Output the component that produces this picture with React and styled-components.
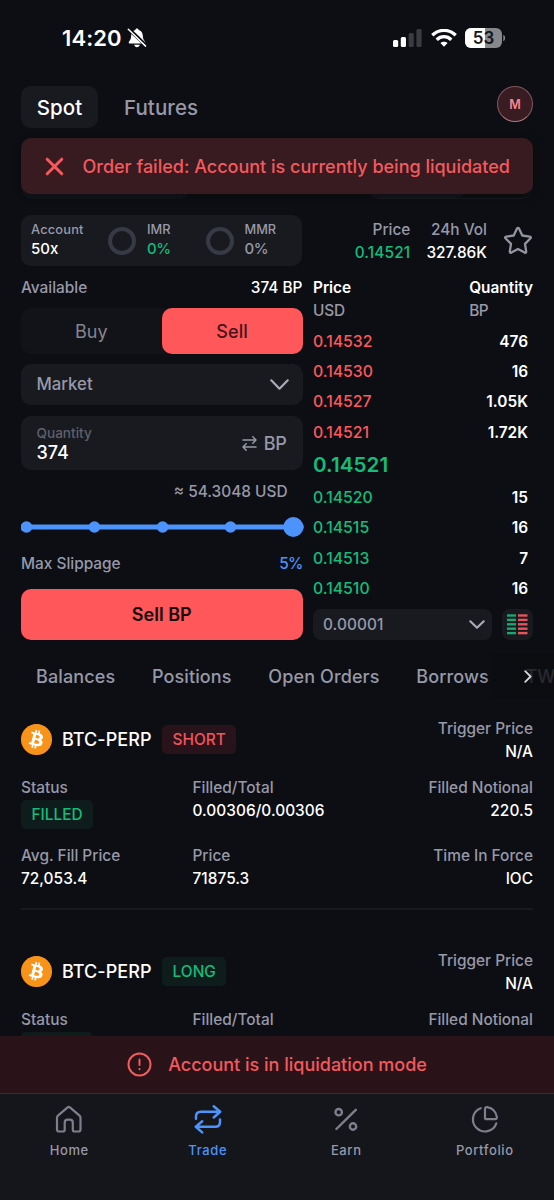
import styled, { createGlobalStyle, css } from 'styled-components';
import { FaBitcoin } from 'react-icons/fa';


const colores = {
    fondo: '#0d0e13',
    panel: '#191a20',
    texto: '#ffffff',
    gris: '#9799a8',
    grisOscuro: '#5e606b',
    rojo: '#ff575a',
    verde: '#12bd7a',
    azul: '#4c93fc',
};


const GlobalStyle = createGlobalStyle`
  * { box-sizing: border-box; }
  body {
    margin: 0;
    background: ${colores.fondo};
    font-family: Inter, sans-serif;
    color: ${colores.texto};
    -webkit-font-smoothing: antialiased;
  }
  button { font: inherit; color: inherit; border: 0; background: none; padding: 0; letter-spacing: inherit; }
  svg { display: block; flex: none; }
`;


const Pantalla = styled.div`
  position: relative;
  width: 554px;
  height: 1200px;
  overflow: hidden;
  display: flex;
  flex-direction: column;
  background: ${colores.fondo};
`;

const Texto = styled.span`
  font-size: ${p => p.$size || 15.4}px;
  font-weight: ${p => p.$weight || 450};
  line-height: ${p => p.$line || 23}px;
  letter-spacing: ${p => p.$spacing ?? 0}px;
  color: ${p => p.$color || colores.texto};
  white-space: nowrap;
`;

const BarraEstado = styled.div`
  height: 75px;
  padding: 0 48px 0 62px;
  display: flex;
  align-items: center;
  gap: 5px;
  flex: none;
`;

const IconosEstado = styled.div`
  margin-left: auto;
  display: flex;
  align-items: center;
  gap: 8.5px;
`;

const Encabezado = styled.header`
  height: 63px;
  padding: 11px 21px 0;
  display: flex;
  align-items: flex-start;
  flex: none;
`;

const Modo = styled.button`
  height: 42px;
  padding: 0 ${p => (p.$activo ? 15.7 : 26)}px;
  border-radius: 10px;
  font-size: 20.5px;
  font-weight: ${p => (p.$activo ? 500 : 450)};
  letter-spacing: 0.08px;
  color: ${p => (p.$activo ? colores.texto : colores.gris)};
  background: ${p => (p.$activo ? colores.panel : 'none')};
`;

const Avatar = styled.div`
  width: 36px;
  height: 36px;
  margin-left: auto;
  border-radius: 50%;
  border: 1px solid #80575d;
  border-bottom-color: #b07a80;
  background: #391c22;
  color: #f5878c;
  font-size: 12.5px;
  font-weight: 600;
  display: flex;
  align-items: center;
  justify-content: center;
`;

const FilaMercado = styled.div`
  height: 61px;
  padding: 0 21px;
  display: flex;
  justify-content: space-between;
  flex: none;
`;

const PildoraMercado = styled.div`
  width: ${p => p.$ancho}px;
  border-radius: 12px;
  border: ${p => (p.$borde ? '1px solid #191a20' : 0)};
  background: ${p => (p.$borde ? 'none' : '#13141a')};
`;

const MitadPildora = styled.div`
  width: 98px;
  height: 100%;
  border-radius: 11px;
  background: #15161c;
`;

const Aviso = styled.div`
  position: absolute;
  top: 138px;
  left: 21px;
  width: 512px;
  height: 56px;
  border-radius: 10px;
  background: #371b20;
  box-shadow: 0 2px 8px rgba(0, 0, 0, 0.3);
  display: flex;
  align-items: center;
  padding-left: 23.5px;
  gap: 19px;
`;

const Resumen = styled.section`
  height: 51px;
  margin: 16px 21px 0;
  display: flex;
  justify-content: space-between;
  flex: none;
`;

const PanelCuenta = styled.div`
  width: 281px;
  border-radius: 10px;
  background: ${colores.panel};
  display: grid;
  grid-template-columns: 77px 39px 58.5px 39px auto;
  align-items: center;
  padding-left: 10px;
`;

const Columna = styled.div`
  display: flex;
  flex-direction: column;
  align-items: ${p => p.$align || 'flex-start'};
  padding-bottom: ${p => p.$abajo || 0}px;
`;

const Aro = styled.div`
  width: 28px;
  height: 28px;
  border-radius: 50%;
  border: 4px solid #373944;
`;

const DatosMercado = styled.div`
  display: flex;
  align-items: center;
  gap: 16px;
`;

const Operar = styled.section`
  height: 374px;
  padding: 0 21px;
  display: grid;
  grid-template-columns: 281.5px 220px;
  gap: 10.5px;
  flex: none;
`;

const Formulario = styled.div`
  display: flex;
  flex-direction: column;
`;

const Fila = styled.div`
  height: ${p => p.$alto}px;
  flex: none;
  display: flex;
  align-items: center;
  justify-content: ${p => p.$justify || 'space-between'};
  padding-right: ${p => p.$derecha || 0}px;
`;

const Lados = styled.div`
  height: 46px;
  display: grid;
  grid-template-columns: 1fr 1fr;
  border-radius: 10px;
  background: #121318;
`;

const Lado = styled.button`
  border-radius: 10px;
  font-size: 18px;
  letter-spacing: 0.1px;
  color: #85868d;
  ${p => p.$activo && css`
    background: ${colores.rojo};
    color: #45151a;
    font-weight: 500;
  `}
`;

const Campo = styled.div`
  height: ${p => p.$alto}px;
  margin-top: ${p => p.$arriba}px;
  padding: 0 ${p => p.$derecha || 16}px 0 15.5px;
  border-radius: 10px;
  background: ${colores.panel};
  display: flex;
  align-items: center;
  justify-content: space-between;
`;

const Unidad = styled.div`
  display: flex;
  align-items: center;
  gap: 7px;
`;

const Deslizador = styled.div`
  height: 30px;
  width: 283px;
  display: flex;
  align-items: center;
`;

const BotonVender = styled.button`
  height: 51px;
  margin-top: 5px;
  border-radius: 10px;
  background: ${colores.rojo};
  color: #160a0d;
  font-size: 18px;
  font-weight: 600;
`;

const Libro = styled.div`
  padding-top: 10px;
  display: flex;
  flex-direction: column;
`;

const CabeceraLibro = styled.div`
  display: flex;
  justify-content: space-between;
  height: 50px;
`;

const PieLibro = styled.div`
  display: grid;
  grid-template-columns: 179px 31px;
  justify-content: space-between;
  height: 31px;
  margin-top: 5px;
`;

const Precision = styled.div`
  border-radius: 8px;
  background: ${colores.panel};
  display: flex;
  align-items: center;
  justify-content: space-between;
  padding: 0 7px 0 10px;
`;

const VistaLibro = styled.div`
  border-radius: 8px;
  background: ${colores.panel};
  display: grid;
  place-items: center;
`;

const Pestanas = styled.nav`
  position: relative;
  height: 72px;
  flex: none;
  display: flex;
  align-items: center;
  gap: 36.7px;
  padding-left: 36px;
  overflow: hidden;
`;

const MasPestanas = styled.div`
  position: absolute;
  right: 0;
  top: 14px;
  width: 70px;
  height: 44px;
  display: flex;
  align-items: center;
  padding-left: 40px;
  background: linear-gradient(90deg, rgba(11, 12, 16, 0) 0, rgba(11, 12, 16, 0.8) 16px);
`;

const Orden = styled.article`
  height: 232px;
  padding: 4.5px 21px 0;
  flex: none;
`;

const CabeceraOrden = styled.div`
  height: 46px;
  display: flex;
  align-items: center;
`;

const IconoMoneda = styled.div`
  width: 31px;
  height: 31px;
  border-radius: 50%;
  background: radial-gradient(circle, #fff 60%, #f7931a 61%);
  color: #f7931a;
  font-size: 31px;
  margin-right: 10px;
`;

const Etiqueta = styled.span`
  height: 29px;
  padding: 0 10.5px;
  border-radius: 5px;
  display: inline-flex;
  align-items: center;
  font-size: 15.4px;
  font-weight: 450;
  color: ${p => (p.$rojo ? '#f4545b' : colores.verde)};
  background: ${p => (p.$rojo ? '#28131a' : '#0e1d1c')};
  margin-left: ${p => p.$izq || 0}px;
  margin-top: ${p => p.$arriba || 0}px;
`;

const Precios = styled.div`
  margin-left: auto;
  display: flex;
  flex-direction: column;
  align-items: flex-end;
`;

const Detalle = styled.div`
  margin-top: 13.5px;
  display: grid;
  grid-template-columns: 171.5px 1fr 1fr;
  grid-auto-rows: 67.7px;
`;

const Linea = styled.div`
  height: 2px;
  margin-top: -3px;
  background: #191a1f;
`;

const Pie = styled.footer`
  position: absolute;
  left: 0;
  right: 0;
  bottom: 0;
  height: 164px;
  background: #14161b;
`;

const Liquidacion = styled.div`
  height: 57px;
  display: flex;
  align-items: center;
  justify-content: center;
  gap: 16px;
  background: #291318;
`;

const Menu = styled.nav`
  height: 107px;
  border-top: 1px solid #303137;
  display: grid;
  grid-template-columns: repeat(4, 1fr);
`;

const ItemMenu = styled.a`
  display: flex;
  flex-direction: column;
  align-items: center;
  padding-top: 10px;
  gap: 7.4px;
  color: ${p => (p.$activo ? colores.azul : '#7e7f8d')};
`;


const ventas = [
    { precio: '0.14532', cantidad: '476' },
    { precio: '0.14530', cantidad: '16' },
    { precio: '0.14527', cantidad: '1.05K' },
    { precio: '0.14521', cantidad: '1.72K' },
];

const compras = [
    { precio: '0.14520', cantidad: '15' },
    { precio: '0.14515', cantidad: '16' },
    { precio: '0.14513', cantidad: '7' },
    { precio: '0.14510', cantidad: '16' },
];

const pestanas = ['Balances', 'Positions', 'Open Orders', 'Borrows', 'TWAP'];

const ordenes = [
    { id: 1, lado: 'SHORT' },
    { id: 2, lado: 'LONG' },
];


const Trazo = ({ w = 30, h = w, grosor = 2, color = 'currentColor', children }) => (
    <svg width={w} height={h} viewBox={`0 0 ${w} ${h}`} fill="none" stroke={color}
         strokeWidth={grosor} strokeLinecap="round" strokeLinejoin="round">
        {children}
    </svg>
);

const Flecha = ({ w = 18, h = 10, color = '#a9abb7' }) => (
    <Trazo w={w} h={h} grosor={2.2} color={color}>
        <path d={`M1.3 1.3L${w / 2} ${h - 1.3}L${w - 1.3} 1.3`} />
    </Trazo>
);

const Silencio = () => (
    <svg width="20" height="20" viewBox="0 0 20 20">
        <path fill="#fff" d="M10 .5c-.9 0-1.5.6-1.6 1.4C5.700 2.600 4.300 4.800 4.200 7.600c-.1 3.200-.8 4.300-2 5.600-.9 1-.5 2.400.9 2.400h13.800c1.400 0 1.800-1.400.9-2.400-1.200-1.300-1.900-2.400-2-5.600-.1-2.800-1.500-5-4.200-5.700C11.500 1.100 10.900.5 10 .5zM7.200 16.800c.3 1.500 1.400 2.400 2.800 2.400s2.500-.9 2.800-2.400z" />
        <path d="M1.500.7L19.500 18" stroke={colores.fondo} strokeWidth="3.600" />
        <path d="M1.300 1.300L18.600 18.100" stroke="#fff" strokeWidth="1.500" strokeLinecap="round" />
    </svg>
);

const Senal = () => (
    <svg width="29" height="18" viewBox="0 0 29 18">
        <rect x="0" y="11" width="5.200" height="7" rx="1.500" fill="#fff" />
        <rect x="7.800" y="8" width="5.200" height="10" rx="1.500" fill="#fff" />
        <rect x="15.600" y="4" width="5.200" height="14" rx="1.500" fill="#3a3b40" />
        <rect x="23.400" y="0" width="5.200" height="18" rx="1.500" fill="#3a3b40" />
    </svg>
);

const Wifi = () => (
    <svg width="26" height="18" viewBox="0 0 26 18" fill="none" stroke="#fff" strokeWidth="3.300">
        <path d="M1.300 6.200C8-.2 18-.2 24.700 6.200" />
        <path d="M5.700 10.700C9.900 6.700 16.100 6.700 20.300 10.700" />
        <path d="M13 17.800l-3.600-3.700c2-1.800 5.200-1.800 7.200 0z" fill="#fff" stroke="none" />
    </svg>
);

const Bateria = () => (
    <svg width="41" height="20" viewBox="0 0 41 20">
        <defs>
            <clipPath id="carga"><rect x="0" y="0" width="37" height="20" rx="6" /></clipPath>
        </defs>
        <g clipPath="url(#carga)">
            <rect width="37" height="20" fill="#86878a" />
            <rect width="20" height="20" fill="#fff" />
        </g>
        <path d="M38.300 6.700c2.400.8 2.400 5.800 0 6.600z" fill="#86878a" />
        <text x="18.500" y="15.900" textAnchor="middle" fontFamily="Inter" fontWeight="600" fontSize="17" fill="#14151a">53</text>
    </svg>
);

const BarrasLibro = () => (
    <svg width="21" height="21" viewBox="0 0 21 21">
        {[0, 4.4, 8.8, 13.2, 17.6].map(y => (
            <g key={y}>
                <rect x="0" y={y + 0.3} width="9" height="2.400" fill="#18a970" />
                <rect x="11" y={y + 0.3} width="9.500" height="2.400" fill="#e65459" />
            </g>
        ))}
    </svg>
);

const IconoHome = () => (
    <Trazo grosor={2.2}>
        <path d="M13.600 3.400L4.200 11.400Q3 12.500 3 14V25.500Q3 27.500 5 27.500H9Q10.700 27.500 10.700 25.800V18.700Q10.700 15.700 13.700 15.700H15.800Q18.800 15.700 18.800 18.700V25.800Q18.800 27.500 20.500 27.500H24.500Q26.500 27.500 26.500 25.500V14Q26.500 12.500 25.300 11.400L15.900 3.400Q14.700 2.400 13.600 3.400Z" />
    </Trazo>
);

const IconoTrade = () => (
    <Trazo grosor={2.5}>
        <path d="M3 14.700V12.500Q3 7.700 7.800 7.700H27M20.700 2.200L27.200 7.700L20.700 13.500" />
        <path d="M27 15.500V18Q27 22.800 22.200 22.800H3M9.200 17.300L2.800 22.800L9.200 28.400" />
    </Trazo>
);

const IconoEarn = () => (
    <Trazo grosor={2.4}>
        <circle cx="7.700" cy="8.200" r="3.200" />
        <circle cx="22" cy="22.500" r="3.200" />
        <path d="M24.800 5.800L5.400 25" />
    </Trazo>
);

const IconoPortfolio = () => (
    <Trazo grosor={2.2}>
        <path d="M10.700 4.200A12 12 0 1 0 26.300 19.300" />
        <path d="M15 5.200Q15 2.900 17.200 3.200A12 12 0 0 1 26.800 12.700Q27.200 15.200 25 15.200H16.500Q15 15.200 15 13.700Z" />
    </Trazo>
);

const menu = [
    { nombre: 'Home', Icono: IconoHome },
    { nombre: 'Trade', Icono: IconoTrade, activo: true },
    { nombre: 'Earn', Icono: IconoEarn },
    { nombre: 'Portfolio', Icono: IconoPortfolio },
];


function FilaLibro({ precio, cantidad, color }) {
    return (
        <Fila $alto={30.3} $derecha={5}>
            <Texto $size={15.8} $weight={500} $color={color}>{precio}</Texto>
            <Texto $weight={600}>{cantidad}</Texto>
        </Fila>
    );
}


function Dato({ titulo, valor, align }) {
    return (
        <Columna $align={align}>
            <Texto $color={colores.gris}>{titulo}</Texto>
            <Texto $weight={500} $spacing={0.03}>{valor}</Texto>
        </Columna>
    );
}


function TarjetaOrden({ lado }) {
    return (
        <Orden>
            <CabeceraOrden>
                <IconoMoneda><FaBitcoin /></IconoMoneda>
                <Texto $size={18} $spacing={0.05}>BTC-PERP</Texto>
                <Etiqueta $rojo={lado === 'SHORT'} $izq={10.5}>{lado}</Etiqueta>
                <Precios>
                    <Texto $color={colores.gris}>Trigger Price</Texto>
                    <Texto $weight={500}>N/A</Texto>
                </Precios>
            </CabeceraOrden>
            <Detalle>
                <Columna>
                    <Texto $color={colores.gris}>Status</Texto>
                    <Etiqueta $arriba={1}>FILLED</Etiqueta>
                </Columna>
                <Dato titulo="Filled/Total" valor="0.00306/0.00306" />
                <Dato titulo="Filled Notional" valor="220.5" align="flex-end" />
                <Dato titulo="Avg. Fill Price" valor="72,053.4" />
                <Dato titulo="Price" valor="71875.3" />
                <Dato titulo="Time In Force" valor="IOC" align="flex-end" />
            </Detalle>
            <Linea />
        </Orden>
    );
}


function App() {
    return (
        <Pantalla>
            <GlobalStyle />
            <BarraEstado>
                <Texto $size={22} $weight={600} $line={28} $spacing={0.1}>14:20</Texto>
                <Silencio />
                <IconosEstado>
                    <Senal />
                    <Wifi />
                    <Bateria />
                </IconosEstado>
            </BarraEstado>

            <Encabezado>
                <Modo $activo>Spot</Modo>
                <Modo>Futures</Modo>
                <Avatar>M</Avatar>
            </Encabezado>

            <FilaMercado>
                <PildoraMercado $ancho={170} />
                <PildoraMercado $ancho={165} $borde><MitadPildora /></PildoraMercado>
            </FilaMercado>

            <Resumen>
                <PanelCuenta>
                    <Columna $abajo={4}>
                        <Texto $size={12.8} $line={19} $color={colores.gris} $spacing={0.2}>Account</Texto>
                        <Texto $size={15} $line={19} $weight={500}>50x</Texto>
                    </Columna>
                    <Aro />
                    <Columna $abajo={4}>
                        <Texto $size={12.8} $line={19} $color={colores.gris}>IMR</Texto>
                        <Texto $size={15} $line={19} $color={colores.verde} $spacing={-0.4}>0%</Texto>
                    </Columna>
                    <Aro />
                    <Columna $abajo={4}>
                        <Texto $size={12.8} $line={19} $color={colores.gris}>MMR</Texto>
                        <Texto $size={15} $line={19} $color={colores.gris} $spacing={-0.4}>0%</Texto>
                    </Columna>
                </PanelCuenta>
                <DatosMercado>
                    <Columna $align="flex-end">
                        <Texto $color={colores.gris}>Price</Texto>
                        <Texto $color={colores.verde} $spacing={0.15}>0.14521</Texto>
                    </Columna>
                    <Columna $align="flex-end">
                        <Texto $color={colores.gris}>24h Vol</Texto>
                        <Texto $spacing={0.05}>327.86K</Texto>
                    </Columna>
                    <Trazo w={30} grosor={2.3} color="#9294a2">
                        <path d="M13.900 2.700L10.700 9.500L3.300 10.600Q1.300 11 2.700 12.500L8 17.900L6.800 25.400Q6.600 27.400 8.400 26.600L15 23L21.600 26.600Q23.400 27.400 23.200 25.400L22 17.900L27.300 12.500Q28.700 11 26.700 10.600L19.300 9.500L16.100 2.700Q15 1 13.900 2.700Z" />
                    </Trazo>
                </DatosMercado>
            </Resumen>

            <Operar>
                <Formulario>
                    <Fila $alto={42}>
                        <Texto $color={colores.gris}>Available</Texto>
                        <Texto $weight={500}>374 BP</Texto>
                    </Fila>
                    <Lados>
                        <Lado>Buy</Lado>
                        <Lado $activo>Sell</Lado>
                    </Lados>
                    <Campo $alto={41} $arriba={10} $derecha={14}>
                        <Texto $size={16.8} $color={colores.gris}>Market</Texto>
                        <Flecha w={19} h={11} />
                    </Campo>
                    <Campo $alto={54} $arriba={11}>
                        <Columna>
                            <Texto $size={13.6} $line={19} $color={colores.grisOscuro}>Quantity</Texto>
                            <Texto $size={18} $line={19}>374</Texto>
                        </Columna>
                        <Unidad>
                            <Trazo w={15} grosor={1.5} color={colores.gris}>
                                <path d="M1 4H14M10.800 .8L14 4L10.800 7.200M14 11H1M4.200 7.800L1 11L4.200 14.200" />
                            </Trazo>
                            <Texto $size={18} $color={colores.gris} $spacing={-0.3}>BP</Texto>
                        </Unidad>
                    </Campo>
                    <Fila $alto={42} $justify="flex-end" $derecha={15}>
                        <Texto $color={colores.gris}>≈ 54.3048 USD</Texto>
                    </Fila>
                    <Deslizador>
                        <svg width="283" height="20" viewBox="0 0 283 20" fill={colores.azul}>
                            <rect x="5" y="7.500" width="272" height="5" />
                            {[5.5, 73.4, 141.6, 209.5, 277].map(x => <circle key={x} cx={x} cy="10" r="5.800" />)}
                            <circle cx="272.300" cy="10" r="10" />
                        </svg>
                    </Deslizador>
                    <Fila $alto={42}>
                        <Texto $color={colores.gris}>Max Slippage</Texto>
                        <Texto $color={colores.azul} $spacing={-0.8}>5%</Texto>
                    </Fila>
                    <BotonVender>Sell BP</BotonVender>
                </Formulario>

                <Libro>
                    <CabeceraLibro>
                        <Columna>
                            <Texto $weight={600} $spacing={-0.05}>Price</Texto>
                            <Texto $color={colores.gris} $spacing={-0.2}>USD</Texto>
                        </Columna>
                        <Columna>
                            <Texto $weight={600}>Quantity</Texto>
                            <Texto $color={colores.gris} $spacing={-0.5}>BP</Texto>
                        </Columna>
                    </CabeceraLibro>
                    {ventas.map(v => <FilaLibro key={v.precio} {...v} color={colores.rojo} />)}
                    <Fila $alto={35.2}>
                        <Texto $size={20.6} $weight={600} $color={colores.verde} $spacing={0.1}>0.14521</Texto>
                    </Fila>
                    {compras.map(c => <FilaLibro key={c.precio} {...c} color={colores.verde} />)}
                    <PieLibro>
                        <Precision>
                            <Texto $color={colores.gris} $spacing={0.1}>0.00001</Texto>
                            <Flecha w={16} h={9} />
                        </Precision>
                        <VistaLibro><BarrasLibro /></VistaLibro>
                    </PieLibro>
                </Libro>
            </Operar>

            <Pestanas>
                {pestanas.map(p => (
                    <Texto key={p} $size={18} $weight={500} $color={colores.gris} $spacing={0.12}>{p}</Texto>
                ))}
                <MasPestanas>
                    <Trazo w={8} h={13} grosor={1.8} color="#d5d6dd"><path d="M1.200 1.200L6.600 6.500L1.200 11.800" /></Trazo>
                </MasPestanas>
            </Pestanas>

            {ordenes.map(o => <TarjetaOrden key={o.id} lado={o.lado} />)}

            <Aviso>
                <Trazo w={19} grosor={3} color="#f6595d"><path d="M2.200 2.200L16.800 16.800M16.800 2.200L2.200 16.800" /></Trazo>
                <Texto $size={18} $color="#f6595d">Order failed: Account is currently being liquidated</Texto>
            </Aviso>

            <Pie>
                <Liquidacion>
                    <Trazo w={25} grosor={2} color="#f6595d">
                        <circle cx="12.500" cy="12.500" r="11" />
                        <path d="M12.500 7.500V13M12.500 16.900V17.200" />
                    </Trazo>
                    <Texto $size={18} $color="#f6595d">Account is in liquidation mode</Texto>
                </Liquidacion>
                <Menu>
                    {menu.map(({ nombre, Icono, activo }) => (
                        <ItemMenu key={nombre} $activo={activo}>
                            <Icono />
                            <Texto $size={13} $line={19} $weight={500} $spacing={0.6} $color={activo ? colores.azul : colores.gris}>{nombre}</Texto>
                        </ItemMenu>
                    ))}
                </Menu>
            </Pie>
        </Pantalla>
    );
}

export default App;
